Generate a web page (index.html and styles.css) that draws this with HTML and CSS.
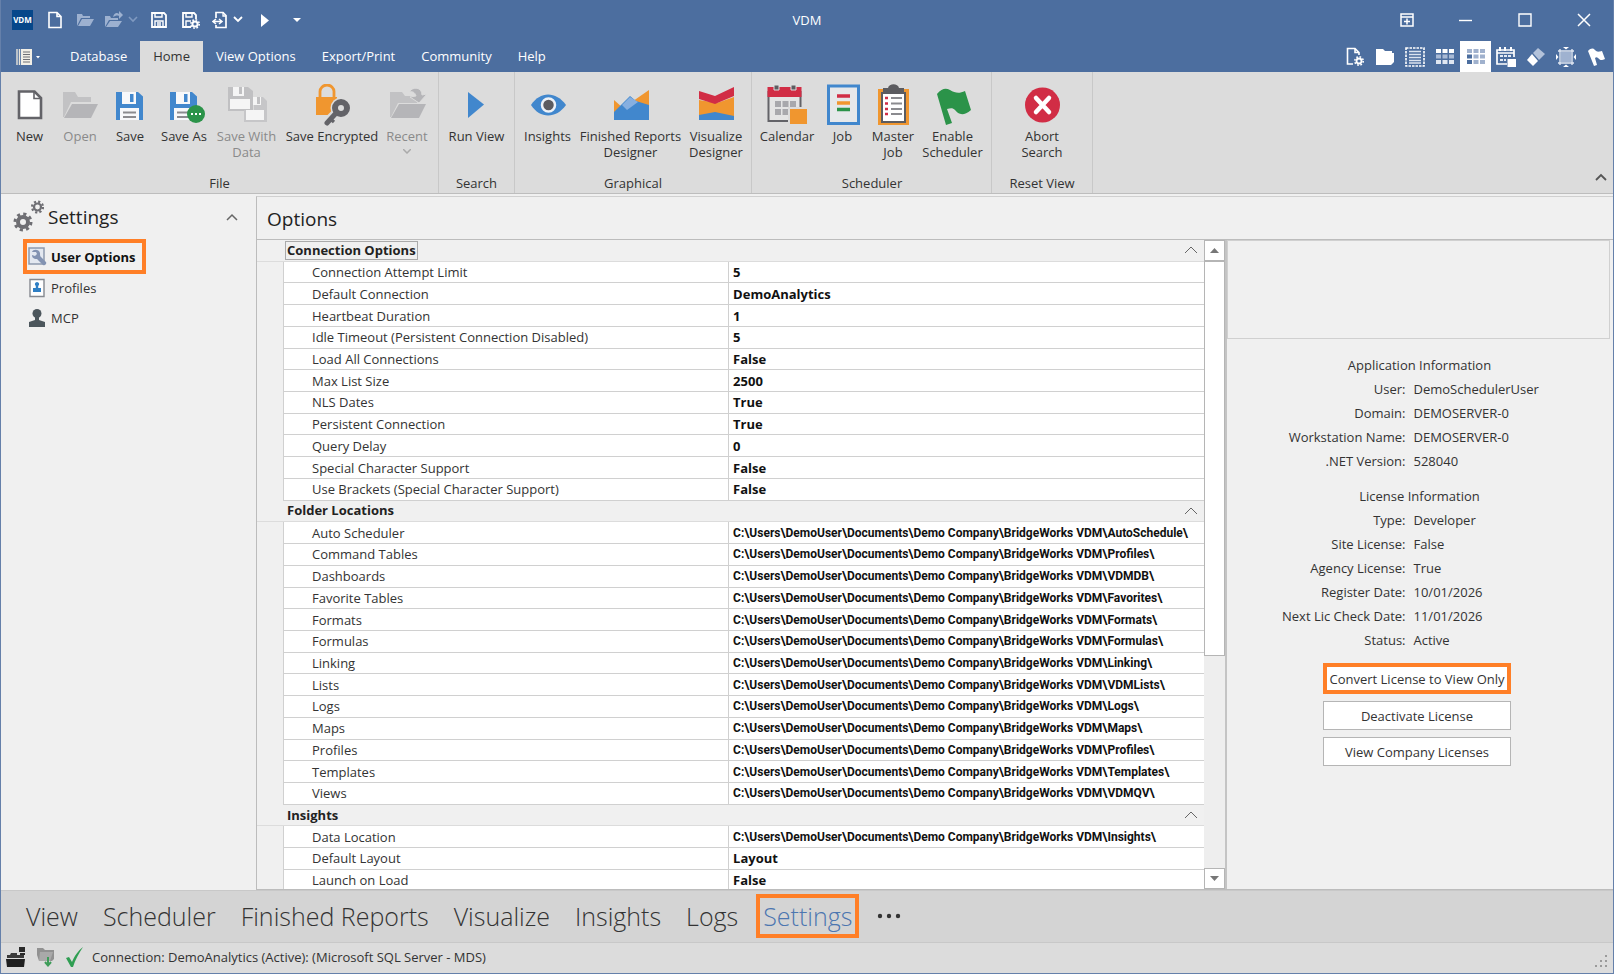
FILE: index.html
```html
<!DOCTYPE html>
<html lang="en">
<head>
<meta charset="utf-8">
<title>VDM</title>
<link rel="stylesheet" href="styles.css">
</head>
<body>
<header class="titlebar">
  <div class="quick">
    <span class="logo">VDM</span>
    <button class="q q-new" aria-label="New"><svg width="16" height="18" viewBox="0 0 16 18"><path d="M2 1.500h8l4 4v11H2z M10 1.500v4h4" fill="none" stroke="#fff" stroke-width="1.600"/></svg></button>
    <button class="q q-open" aria-label="Open"><svg width="18" height="14" viewBox="0 0 18 14"><path d="M1 13V1h5l1 2h7v2H5z M6 6h12l-4 7H2z" fill="#9db1d0"/></svg></button>
    <button class="q q-split" aria-label="Open recent"><svg width="34" height="18" viewBox="0 0 34 18"><path d="M1 16V5h5l1 2h7v2H5z M6 10h12l-4 6H2z" fill="#9db1d0"/><path d="M9 6c1-4 4-5 6-3V0l4 4-4 4V5c-2-1-4 0-6 1z" fill="#9db1d0"/><path d="M25 6l4 4 4-4" fill="none" stroke="#7f99c0" stroke-width="1.600"/></svg></button>
    <button class="q q-save" aria-label="Save"><svg width="16" height="16" viewBox="0 0 16 16"><path d="M1 1h12l2 2v12H1z" fill="none" stroke="#fff" stroke-width="1.800"/><path d="M4 1v4h7V1 M4 15V9h8v6 M6 11h4M6 13h4" fill="none" stroke="#fff" stroke-width="1.400"/></svg></button>
    <button class="q q-gear" aria-label="Save settings"><svg width="18" height="17" viewBox="0 0 18 17"><path d="M9 15H1V1h11l2 2v4" fill="none" stroke="#fff" stroke-width="1.800"/><path d="M4 1v4h6V1 M4 15V9h5" fill="none" stroke="#fff" stroke-width="1.400"/><circle cx="13" cy="12" r="2.600" fill="none" stroke="#fff" stroke-width="2"/><circle cx="13" cy="12" r="4.200" fill="none" stroke="#fff" stroke-width="1.600" stroke-dasharray="1.700 1.600"/></svg></button>
    <button class="q q-split" aria-label="Import"><svg width="32" height="18" viewBox="0 0 32 18"><path d="M4 7V1.500h7l3 3v12H4V14" fill="none" stroke="#fff" stroke-width="1.700"/><path d="M11 1v4h3" fill="none" stroke="#fff" stroke-width="1.300"/><path d="M4 8L1 10.500l3 2.500M7 8l3 2.500L7 13M2 10.500h7" fill="none" stroke="#fff" stroke-width="1.500"/><path d="M22 6l4 4 4-4" fill="none" stroke="#fff" stroke-width="1.800"/></svg></button>
    <button class="q q-play" aria-label="Run"><svg width="8" height="13" viewBox="0 0 8 13"><path d="M0 0l8 6.500L0 13z" fill="#fff"/></svg></button>
    <button class="q q-play" aria-label="Customize toolbar"><svg width="8" height="4" viewBox="0 0 8 4"><path d="M0 0h8L4 4z" fill="#fff"/></svg></button>
  </div>
  <h1 class="title">VDM</h1>
  <div class="window">
    <button aria-label="Ribbon display"><svg width="14" height="14" viewBox="0 0 14 14"><path d="M1 1h12v12H1zM1 4h12M7 5.500v6M4 8.500h6" fill="none" stroke="#fff" stroke-width="1.500"/></svg></button>
    <button aria-label="Minimize"><svg width="13" height="14" viewBox="0 0 13 14"><path d="M0 7.500h13" stroke="#fff" stroke-width="1.400"/></svg></button>
    <button aria-label="Maximize"><svg width="14" height="14" viewBox="0 0 14 14"><path d="M1 1h12v12H1z" fill="none" stroke="#fff" stroke-width="1.400"/></svg></button>
    <button aria-label="Close"><svg width="14" height="14" viewBox="0 0 14 14"><path d="M1 1l12 12M13 1L1 13" stroke="#fff" stroke-width="1.500"/></svg></button>
  </div>
</header>

<nav class="tabs">
  <button class="filemenu" aria-label="Application menu"><svg width="24" height="18" viewBox="0 0 24 18"><path d="M1 1v16M3.500 1v16" stroke="#e9e4da" stroke-width="1.400"/><path d="M5 1h11v16H5z" fill="#f2efe6"/><path d="M7 4h7M7 6.500h7M7 9h7M7 11.500h7M7 14h7" stroke="#6f7075" stroke-width="1.200"/><path d="M20 8h4l-2 2.500z" fill="#fff"/></svg></button>
  <a class="tab" href="#database">Database</a>
  <a class="tab active" href="#home">Home</a>
  <a class="tab" href="#view">View Options</a>
  <a class="tab" href="#export">Export/Print</a>
  <a class="tab" href="#community">Community</a>
  <a class="tab" href="#help">Help</a>
  <div class="tools">
    <button aria-label="Document settings"><svg width="18" height="20" viewBox="0 0 18 20"><path d="M7 17H1.500V1.500H9L13 5.500V8M9 1.500v4h4" fill="none" stroke="#fff" stroke-width="1.600"/><circle cx="13" cy="14" r="2.500" fill="none" stroke="#fff" stroke-width="1.800"/><circle cx="13" cy="14" r="4.200" fill="none" stroke="#fff" stroke-width="1.600" stroke-dasharray="1.700 1.600"/></svg></button>
    <button aria-label="Folder"><svg width="18" height="16" viewBox="0 0 18 16"><path d="M0 0h7l2 2h7v2h2v9l-3 3H0z" fill="#fff"/></svg></button>
    <button aria-label="Select rows"><svg width="20" height="20" viewBox="0 0 20 20"><path d="M1 1h18v18H1z" fill="none" stroke="#fff" stroke-width="1.600" stroke-dasharray="2.500 1"/><path d="M4 4.500h12M4 7.500h12M4 10.500h12M4 13.500h12M4 16h12" stroke="#dce4f0" stroke-width="1.400"/></svg></button>
    <button aria-label="Grid"><svg width="18" height="15" viewBox="0 0 18 15"><path d="M0 0h5v4H0zM6.500 0h5v4h-5zM13 0h5v4h-5z" fill="#fff"/><path d="M0 5.500h5v4H0zM6.500 5.500h5v4h-5zM13 5.500h5v4h-5z" fill="#a9bad5"/><path d="M0 11h5v4H0zM6.500 11h5v4h-5zM13 11h5v4h-5z" fill="#dfe6f1"/></svg></button>
    <button class="selected" aria-label="Tiles"><svg width="18" height="15" viewBox="0 0 18 15"><path d="M0 0h5v4H0zM6.500 0h5v4h-5zM13 0h5v4h-5zM6.500 5.500h5v4h-5zM13 5.500h5v4h-5zM6.500 11h5v4h-5zM13 11h5v4h-5z" fill="#a0b1cd"/><path d="M0 5.500h5v4H0zM0 11h5v4H0z" fill="#4c6e9f"/></svg></button>
    <button aria-label="Calendar"><svg width="20" height="20" viewBox="0 0 20 20"><path d="M11 17H1V3h17v7M1 6h17" fill="none" stroke="#fff" stroke-width="1.700"/><path d="M4 0v4M9 0v4M15 0v4" stroke="#fff" stroke-width="2"/><path d="M4 9h3M8 9h3M12 9h3M4 13h3M8 13h2" stroke="#e3eaf4" stroke-width="2"/><path d="M11.500 12H20v8h-8.500z" fill="#fff"/></svg></button>
    <button aria-label="Erase"><svg width="18" height="18" viewBox="0 0 18 18"><path d="M11 0l7 6-6 6-6-7z" fill="#b3c2da"/><path d="M5 6l6 7-5 5-6-6z" fill="#fff"/></svg></button>
    <button aria-label="Fit"><svg width="20" height="20" viewBox="0 0 20 20"><path d="M5 5h10v10H5z" fill="#9fb2d0"/><path d="M4 2v16M16 2v16M2 4h16M2 16h16" stroke="#dfe6f1" stroke-width="1.400"/><path d="M7 0h6l-3 2.500zM7 20h6l-3-2.500zM0 7v6l2.500-3zM20 7v6l-2.500-3z" fill="#fff"/></svg></button>
    <button class="last" aria-label="Flag"><svg width="18" height="18" viewBox="0 0 18 18"><path d="M0 3c3-3 5-3 7-1s3 2 7 1l3 8c-4 2-5 1-7-1-1-1-2-1-3 0l2 7-3 1z" fill="#fff"/></svg></button>
  </div>
</nav>

<section class="ribbon" aria-label="Home ribbon">
  <div class="group g-file">
    <div class="items">
      <button class="item w51"><svg viewBox="0 0 42 42"><path d="M10 7.500h15.500l6.500 6.500v20H10z" fill="#fff" stroke="#636368" stroke-width="2.600"/><path d="M25 8v6.500h7" fill="none" stroke="#636368" stroke-width="1.600"/></svg>New</button>
      <button class="item w50 off"><svg viewBox="0 0 42 42"><path d="M4 33V8h12l3 5h13v5H12L5 33z" fill="#c2c2c4"/><path d="M13 20h26l-7 14H5z" fill="#b5b5b8"/></svg>Open</button>
      <button class="item w50"><svg viewBox="0 0 42 42"><path d="M7 8h22l5 4.500V36H7z" fill="#4187cd"/><path d="M13 8h14v12H13zM11 24h19v12H11z" fill="#f7f8fa"/><path d="M21 10h3.500v8H21z" fill="#4187cd"/><path d="M14 28.500h13M14 33h13" stroke="#8b8b8f" stroke-width="1.800"/></svg>Save</button>
      <button class="item w58"><svg viewBox="0 0 42 42"><path d="M7 8h22l5 4.500V36H7z" fill="#4187cd"/><path d="M13 8h14v12H13zM11 24h19v12H11z" fill="#f7f8fa"/><path d="M21 10h3.500v8H21z" fill="#4187cd"/><path d="M14 28.500h13M14 33h13" stroke="#8b8b8f" stroke-width="1.800"/><circle cx="33" cy="30" r="9" fill="#2b9349"/><path d="M28 30h2M32 30h2M36 30h2" stroke="#fff" stroke-width="2"/></svg>Save As</button>
      <button class="item w67 off"><svg viewBox="0 0 42 42"><path d="M2 3h20l5 4v20H2z" fill="#c0c0c2"/><path d="M7 3h11v9H7zM4 15h20v10H4z" fill="#f5f5f5"/><path d="M13 3h3v7h-3z" fill="#c0c0c2"/><path d="M18 26h10v-13h9l4 4v21H18z" fill="#c6c6c8"/><path d="M27 13h8v8h-8zM20 26h18v10H20z" fill="#f5f5f5"/><path d="M31 13h3v7h-3z" fill="#c0c0c2"/></svg>Save With<br>Data</button>
      <button class="item w104"><svg viewBox="0 0 42 42"><path d="M9 14V7.500a7 6.500 0 0 1 14 0V14" fill="none" stroke="#f0962f" stroke-width="2.800"/><path d="M5 13h21v18H5z" fill="#f0962f"/><path d="M17 37L25 29" stroke="#dcdcdc" stroke-width="9"/><circle cx="30" cy="24" r="10.500" fill="#dcdcdc"/><circle cx="30" cy="24" r="6" fill="#dcdcdc" stroke="#636368" stroke-width="6"/><path d="M26 28L16 39" stroke="#636368" stroke-width="5" stroke-linecap="round"/><path d="M18 34l5 4" stroke="#636368" stroke-width="3.500"/></svg>Save Encrypted</button>
      <button class="item w46 off"><svg viewBox="0 0 42 42"><path d="M4 33V8h12l3 4h8l4 4v3H12L5 33z" fill="#c2c2c4"/><path d="M13 20h27l-7 14H5z" fill="#b5b5b8"/><path d="M23 8C27 2 36 3 36 11l5-1-8 9-9-6 6-1c-1-4-4-5-7-4z" fill="#b5b5b8" stroke="#dcdcdc"/></svg>Recent<svg class="chev" viewBox="0 0 8 5"><path d="M0 0l4 4 4-4" fill="none" stroke="#aaa" stroke-width="1.500"/></svg></button>
    </div>
    <div class="caption">File</div>
  </div>
  <div class="group g-search">
    <div class="items">
      <button class="item w75"><svg viewBox="0 0 42 42"><path d="M12 8l16 12.500L12 34z" fill="#4187cd"/></svg>Run View</button>
    </div>
    <div class="caption">Search</div>
  </div>
  <div class="group g-graph">
    <div class="items">
      <button class="item w55"><svg viewBox="0 0 42 42"><path d="M4 21C13 7 29 7 39 21 29 35 13 35 4 21z" fill="#4187cd"/><circle cx="21.500" cy="21" r="6.500" fill="#5c5c60" stroke="#eef2f7" stroke-width="2.500"/></svg>Insights</button>
      <button class="item w110"><svg viewBox="0 0 42 42"><path d="M4 16l9 8L39 6v24H4z" fill="#f0962f"/><path d="M4 28l16-16 6 5 13 4v15H4z" fill="#4187cd"/><path d="M12 21l8-8 8 5-11 8z" fill="#86afe0"/></svg>Finished Reports<br>Designer</button>
      <button class="item w60"><svg viewBox="0 0 42 42"><path d="M4 16l18 3 17-6v20H4z" fill="#f0962f"/><path d="M4 7l16 5 19-9v9l-19 8L4 15z" fill="#d12d45"/><path d="M4 31l16-3 19 4v4H4z" fill="#4187cd"/></svg>Visualize<br>Designer</button>
    </div>
    <div class="caption">Graphical</div>
  </div>
  <div class="group g-sched">
    <div class="items">
      <button class="item w60"><svg viewBox="0 0 42 42"><path d="M2.500 8h32v29h-32z" fill="#e4e4e4" stroke="#636368" stroke-width="2"/><path d="M1.500 3h34v10h-34z" fill="#d12d45"/><path d="M8 1h5v5H8zM25 1h5v5h-5z" fill="#5c5c60" stroke="#ddd"/><path d="M9 17h6v6H9zM16.500 17h6v6h-6zM24 17h6v6h-6zM9 25h6v6H9zM16.500 25h6v6h-6z" fill="#a8a8ac"/><path d="M22 23h20v19H22z" fill="#dcdcdc"/><path d="M24 25h17v15H24z" fill="#f0962f"/></svg>Calendar</button>
      <button class="item w51"><svg viewBox="0 0 42 42"><path d="M6.500 2h30v37.500h-30z" fill="#e6e8ea" stroke="#4187cd" stroke-width="3"/><path d="M15 12h13" stroke="#d12d45" stroke-width="3.500"/><path d="M15 19h13" stroke="#f0962f" stroke-width="3.500"/><path d="M15 25.500h13" stroke="#2b9349" stroke-width="3.500"/></svg>Job</button>
      <button class="item w50"><svg viewBox="0 0 42 42"><path d="M6 5h31v36H6z" fill="#f0962f"/><path d="M10 9h23v29H10z" fill="#fff" stroke="#5c5c60" stroke-width="2"/><path d="M11 10V4h5c1-5 10-5 11 0h5v6z" fill="#5c5c60"/><path d="M13 14h3M13 19.500h3M13 25h3M13 30h3" stroke="#d12d45" stroke-width="2.500"/><path d="M19 14h11M19 19.500h11M19 25h11M19 30h11" stroke="#8b8b8f" stroke-width="1.800"/></svg>Master<br>Job</button>
      <button class="item w69"><svg viewBox="0 0 42 42"><path d="M5 10c5-6 9-6 13-4 5 3 9 4 15 1l6 19c-8 7-13 4-16 0-2-2-4-2-8-1l5 14-6 2z" fill="#2b9349"/></svg>Enable<br>Scheduler</button>
    </div>
    <div class="caption">Scheduler</div>
  </div>
  <div class="group g-reset">
    <div class="items">
      <button class="item w100"><svg viewBox="0 0 42 42"><circle cx="21.500" cy="21" r="17.500" fill="#d12d45"/><path d="M15 14l13 14M28 14L15 28" stroke="#fff" stroke-width="4.500" stroke-linecap="round"/></svg>Abort<br>Search</button>
    </div>
    <div class="caption">Reset View</div>
  </div>
  <button class="collapse" aria-label="Collapse ribbon"><svg width="12" height="8" viewBox="0 0 12 8"><path d="M1 7l5-5 5 5" fill="none" stroke="#555" stroke-width="1.800"/></svg></button>
</section>

<main class="work">
  <aside class="side">
    <div class="sidehead">
      <svg width="32" height="34" viewBox="0 0 32 34"><g fill="none" stroke="#6e6e73"><circle cx="11" cy="22" r="5" stroke-width="4"/><circle cx="11" cy="22" r="8" stroke-width="3" stroke-dasharray="3.140 3.140"/><circle cx="25.500" cy="7" r="3.500" stroke-width="2.200"/><circle cx="25.500" cy="7" r="5.500" stroke-width="2.200" stroke-dasharray="2.160 2.160"/></g></svg>
      <h2>Settings</h2>
      <button aria-label="Collapse settings"><svg width="12" height="8" viewBox="0 0 12 8"><path d="M1 7l5-5 5 5" fill="none" stroke="#666" stroke-width="1.500"/></svg></button>
    </div>
    <a class="sidelink current" href="#user"><svg width="20" height="20" viewBox="0 0 20 20"><path d="M1 1h15v16H1z" fill="#e3e8f0" stroke="#8d99ad" stroke-width="1.500"/><path d="M4 5c1-3 7-3 8 1 0 2 0 3 1 4l5 5c1 2-1 4-3 3l-6-6c-4 0-5-2-5-4l3 1 2-2-1-2z" fill="#8393b2"/></svg>User Options</a>
    <a class="sidelink" href="#profiles"><svg width="20" height="20" viewBox="0 0 20 20"><path d="M2 1.500h14v17H2z" fill="#fff" stroke="#85898f" stroke-width="1.400"/><path d="M9 4a2.200 2.200 0 0 1 1.200 4v2h2.800v4H5v-4h2.800V8A2.200 2.200 0 0 1 9 4z" fill="#2f7fc4"/></svg>Profiles</a>
    <a class="sidelink" href="#mcp"><svg width="20" height="20" viewBox="0 0 20 20"><circle cx="9" cy="5.500" r="4.500" fill="#4c565c"/><path d="M7 8h4v4l6 2v5H1v-5l6-2z" fill="#4c565c"/></svg>MCP</a>
  </aside>

  <section class="content">
    <h2 class="heading">Options</h2>
    <div class="panes">
      <div class="gridwrap">
        <div class="scroller">
        <table class="grid">
          <colgroup><col class="c-mark"><col class="c-name"><col></colgroup>
          <tbody>
          <tr class="cat focus"><th colspan="3"><button><span>Connection Options</span><svg class="up" viewBox="0 0 12 8"><path d="M0 7l6-6 6 6"/></svg></button></th></tr>
          <tr><td></td><td>Connection Attempt Limit</td><td>5</td></tr>
          <tr><td></td><td>Default Connection</td><td>DemoAnalytics</td></tr>
          <tr><td></td><td>Heartbeat Duration</td><td>1</td></tr>
          <tr><td></td><td>Idle Timeout (Persistent Connection Disabled)</td><td>5</td></tr>
          <tr><td></td><td>Load All Connections</td><td>False</td></tr>
          <tr><td></td><td>Max List Size</td><td>2500</td></tr>
          <tr><td></td><td>NLS Dates</td><td>True</td></tr>
          <tr><td></td><td>Persistent Connection</td><td>True</td></tr>
          <tr><td></td><td>Query Delay</td><td>0</td></tr>
          <tr><td></td><td>Special Character Support</td><td>False</td></tr>
          <tr><td></td><td>Use Brackets (Special Character Support)</td><td>False</td></tr>
          <tr class="cat"><th colspan="3"><button><span>Folder Locations</span><svg class="up" viewBox="0 0 12 8"><path d="M0 7l6-6 6 6"/></svg></button></th></tr>
          <tr class="path"><td></td><td>Auto Scheduler</td><td>C:\Users\DemoUser\Documents\Demo Company\BridgeWorks VDM\AutoSchedule\</td></tr>
          <tr class="path"><td></td><td>Command Tables</td><td>C:\Users\DemoUser\Documents\Demo Company\BridgeWorks VDM\Profiles\</td></tr>
          <tr class="path"><td></td><td>Dashboards</td><td>C:\Users\DemoUser\Documents\Demo Company\BridgeWorks VDM\VDMDB\</td></tr>
          <tr class="path"><td></td><td>Favorite Tables</td><td>C:\Users\DemoUser\Documents\Demo Company\BridgeWorks VDM\Favorites\</td></tr>
          <tr class="path"><td></td><td>Formats</td><td>C:\Users\DemoUser\Documents\Demo Company\BridgeWorks VDM\Formats\</td></tr>
          <tr class="path"><td></td><td>Formulas</td><td>C:\Users\DemoUser\Documents\Demo Company\BridgeWorks VDM\Formulas\</td></tr>
          <tr class="path"><td></td><td>Linking</td><td>C:\Users\DemoUser\Documents\Demo Company\BridgeWorks VDM\Linking\</td></tr>
          <tr class="path"><td></td><td>Lists</td><td>C:\Users\DemoUser\Documents\Demo Company\BridgeWorks VDM\VDMLists\</td></tr>
          <tr class="path"><td></td><td>Logs</td><td>C:\Users\DemoUser\Documents\Demo Company\BridgeWorks VDM\Logs\</td></tr>
          <tr class="path"><td></td><td>Maps</td><td>C:\Users\DemoUser\Documents\Demo Company\BridgeWorks VDM\Maps\</td></tr>
          <tr class="path"><td></td><td>Profiles</td><td>C:\Users\DemoUser\Documents\Demo Company\BridgeWorks VDM\Profiles\</td></tr>
          <tr class="path"><td></td><td>Templates</td><td>C:\Users\DemoUser\Documents\Demo Company\BridgeWorks VDM\Templates\</td></tr>
          <tr class="path"><td></td><td>Views</td><td>C:\Users\DemoUser\Documents\Demo Company\BridgeWorks VDM\VDMQV\</td></tr>
          <tr class="cat"><th colspan="3"><button><span>Insights</span><svg class="up" viewBox="0 0 12 8"><path d="M0 7l6-6 6 6"/></svg></button></th></tr>
          <tr class="path"><td></td><td>Data Location</td><td>C:\Users\DemoUser\Documents\Demo Company\BridgeWorks VDM\Insights\</td></tr>
          <tr><td></td><td>Default Layout</td><td>Layout</td></tr>
          <tr><td></td><td>Launch on Load</td><td>False</td></tr>
          </tbody>
        </table>
        </div>
        <div class="scrollbar">
          <button aria-label="Scroll up"><svg width="9" height="5" viewBox="0 0 9 5"><path d="M0 5h9L4.500 0z" fill="#777"/></svg></button>
          <div class="track"><div class="thumb"></div></div>
          <button aria-label="Scroll down"><svg width="9" height="5" viewBox="0 0 9 5"><path d="M0 0h9L4.500 5z" fill="#777"/></svg></button>
        </div>
      </div>
      <aside class="info">
        <div class="blank"></div>
        <h3>Application Information</h3>
        <dl>
          <dt>User:</dt><dd>DemoSchedulerUser</dd>
          <dt>Domain:</dt><dd>DEMOSERVER-0</dd>
          <dt>Workstation Name:</dt><dd>DEMOSERVER-0</dd>
          <dt>.NET Version:</dt><dd>528040</dd>
        </dl>
        <h3>License Information</h3>
        <dl>
          <dt>Type:</dt><dd>Developer</dd>
          <dt>Site License:</dt><dd>False</dd>
          <dt>Agency License:</dt><dd>True</dd>
          <dt>Register Date:</dt><dd>10/01/2026</dd>
          <dt>Next Lic Check Date:</dt><dd>11/01/2026</dd>
          <dt>Status:</dt><dd>Active</dd>
        </dl>
        <div class="actions">
          <button class="marked">Convert License to View Only</button>
          <button>Deactivate License</button>
          <button>View Company Licenses</button>
        </div>
      </aside>
    </div>
  </section>
</main>

<nav class="modules">
  <a href="#v">View</a>
  <a href="#s">Scheduler</a>
  <a href="#f">Finished Reports</a>
  <a href="#z">Visualize</a>
  <a href="#i">Insights</a>
  <a href="#l">Logs</a>
  <a class="current" href="#t">Settings</a>
  <button aria-label="More"><svg width="24" height="6" viewBox="0 0 24 6"><g fill="#333"><circle cx="3" cy="3" r="2.200"/><circle cx="12" cy="3" r="2.200"/><circle cx="21" cy="3" r="2.200"/></g></svg></button>
</nav>

<footer class="status">
  <svg width="20" height="20" viewBox="0 0 20 20"><path d="M1 8h3l1-2h6v2h7v3H1z" fill="#3a3a3a"/><path d="M0 12h19l-1 8H1z" fill="#1f1f1f"/><path d="M13 0h6v5h-6zM14 6h5v2h-5z" fill="#2a2a2a"/></svg>
  <svg width="18" height="20" viewBox="0 0 18 20"><path d="M0 1h6l2 2h9v9l-2 2H2L0 8z" fill="#919191"/><path d="M3 5h13l-3 9H2z" fill="#a9a9a9"/><path d="M11 10v8M8 15l3 3.500 3-3.500" fill="none" stroke="#3d9c58" stroke-width="2"/></svg>
  <svg width="18" height="20" viewBox="0 0 18 20"><path d="M0 11l3-1 3 5C9 8 12 4 17 0 13 6 9 13 7 20H5z" fill="#2f9e52"/></svg>
  <span>Connection: DemoAnalytics (Active): (Microsoft SQL Server - MDS)</span>
  <svg class="grip" width="14" height="14" viewBox="0 0 14 14"><path d="M11 1h2v2h-2zM6 6h2v2H6zM11 6h2v2h-2zM1 11h2v2H1zM6 11h2v2H6zM11 11h2v2h-2z" fill="#9a9a9a"/></svg>
</footer>
</body>
</html>
```
FILE: styles.css
```css
* { box-sizing: border-box; }

body {
  margin: 0;
  height: 100vh;
  display: flex;
  flex-direction: column;
  overflow: hidden;
  border: 1px solid #6580aa;
  border-top: 0;
  background: #f0f0f0;
  color: #333;
  font: 13px/16px "Open Sans", "Noto Sans", sans-serif;
}

h1, h2, h3, dl, dd { margin: 0; font-weight: 400; }
a { color: inherit; text-decoration: none; }
svg { flex: none; display: block; }

button {
  margin: 0;
  padding: 0;
  border: 0;
  background: none;
  color: inherit;
  font: inherit;
}

/* Title bar */
.titlebar {
  display: grid;
  grid-template-columns: 1fr auto 1fr;
  align-items: center;
  height: 41px;
  flex: none;
  padding-bottom: 1px;
  background: #4c6e9f;
  color: #fff;
}
.quick { display: flex; align-items: center; padding-left: 11px; }
.logo {
  width: 21px;
  margin-right: 5px;
  background: #06478a;
  font-size: 8px;
  font-weight: 700;
  line-height: 20px;
  text-align: center;
}
.q { display: flex; align-items: center; justify-content: center; height: 24px; }
.q-new { width: 33px; }
.q-open { width: 28px; }
.q-split { width: 43px; }
.q-save { width: 34px; }
.q-gear { width: 30px; }
.q-play { width: 32px; }
.title { font-size: 13px; }
.window { display: flex; justify-content: flex-end; }
.window button { width: 59px; height: 39px; display: flex; align-items: center; justify-content: center; }

/* Ribbon tabs */
.tabs { display: flex; height: 31px; flex: none; background: #4c6e9f; color: #fff; }
.filemenu { width: 56px; padding-left: 15px; }
.tab { padding: 0 13px; line-height: 30px; }
.tab.active { background: #dcdcdc; color: #333; }
.tools { display: flex; margin-left: auto; }
.tools button { width: 30px; display: flex; align-items: center; justify-content: center; }
.tools .selected { width: 31px; background: #fff; }
.tools .last { width: 32px; }

/* Ribbon */
.ribbon {
  display: flex;
  flex: none;
  height: 122px;
  background: #dcdcdc;
  border-bottom: 1px solid #bdbdbd;
}
.group {
  display: flex;
  flex-direction: column;
  justify-content: space-between;
  padding: 12px 5px 2px;
  border-right: 1px solid #c8c8c8;
}
.g-file { padding: 12px 0 2px; }
.g-file .items { padding: 0 8px 0 3px; }
.g-search, .g-reset { padding: 12px 0 2px; }
.g-sched { padding: 12px 4px 2px 5px; }
.items { display: flex; align-items: flex-start; }
.item { display: flex; flex-direction: column; align-items: center; white-space: nowrap; }
.item svg { width: 42px; height: 42px; margin-bottom: 2px; }
.item .chev { width: 8px; height: 5px; margin: 5px 0 0; }
.off { color: #8a8a8a; }
.w46 { width: 46px; }
.w50 { width: 50px; }
.w51 { width: 51px; }
.w55 { width: 55px; }
.w58 { width: 58px; }
.w60 { width: 60px; }
.w67 { width: 67px; }
.w69 { width: 69px; }
.w75 { width: 75px; }
.w100 { width: 100px; }
.w104 { width: 104px; }
.w110 { width: 111px; }
.caption { text-align: center; }
.collapse { margin: auto 6px 12px auto; }

/* Work area */
.work { display: flex; flex: 1; min-height: 0; }
.side { width: 255px; flex: none; padding: 5px 0 0 11px; }
.sidehead { display: flex; align-items: center; height: 35px; margin-bottom: 5px; color: #222; }
.sidehead h2 { flex: 1; padding-left: 4px; font-size: 19px; }
.sidehead button { width: 12px; margin-right: 18px; }
.sidelink { display: flex; align-items: center; gap: 3px; width: max-content; height: 30px; padding: 0 16px; }
.sidelink.current {
  height: 35px;
  margin-left: 11px;
  margin-bottom: -1px;
  padding: 0 6px 0 1px;
  border: 4px solid #ff7f27;
  color: #111;
  font-weight: 700;
}
.content {
  display: flex;
  flex-direction: column;
  flex: 1;
  min-width: 0;
  margin-top: 2px;
  border-left: 1px solid #bcbcbc;
  border-top: 1px solid #d0d0d0;
}
.heading { height: 42px; padding-left: 10px; font-size: 19px; line-height: 45px; color: #222; }
.panes { display: flex; flex: 1; min-height: 0; border-top: 1px solid #bcbcbc; border-bottom: 1px solid #bcbcbc; }
.gridwrap { display: flex; flex: 1; min-width: 0; border-right: 2px solid #c4c4c4; }
.scroller { flex: 1; min-width: 0; overflow: hidden; }

.grid { width: 100%; height: calc(100% + 3px); border-spacing: 0; table-layout: fixed; }
.c-mark { width: 27px; }
.c-name { width: 47%; }
.grid th, .grid td { height: 21px; padding: 0; white-space: nowrap; text-align: left; line-height: 18px; }
.grid td { background: #fff; border-bottom: 1px solid #d0d0d0; }
.grid td:first-child { background: #f0f0f0; border-bottom: 0; border-right: 1px solid #d0d0d0; }
.grid td:nth-child(2) { padding-left: 28px; border-right: 1px solid #d0d0d0; }
.grid td:last-child { padding-left: 4px; color: #111; font-weight: 700; }
.grid .path td:last-child { font-family: Roboto, "Open Sans", sans-serif; font-size: 12px; }
.cat th { background: #f0f0f0; color: #222; font-weight: 700; border-bottom: 1px solid #dcdcdc; }
.cat button { display: flex; align-items: center; justify-content: space-between; width: 100%; padding: 0 7px 0 29px; line-height: 17px; }
.cat span { padding: 0 1px; }
.focus span { outline: 1px solid #aaa; }
.up { width: 12px; height: 8px; fill: none; stroke: #666; stroke-width: 1; }

.scrollbar { display: flex; flex-direction: column; width: 21px; background: #eee; }
.scrollbar button { display: flex; align-items: center; justify-content: center; height: 21px; background: #fff; border: 1px solid #b5b5b5; }
.track { flex: 1; }
.thumb { height: 65%; background: #fff; border: 1px solid #b5b5b5; }

/* Information pane */
.info { width: 386px; flex: none; padding-right: 3px; }
.blank { height: 99px; border: 1px solid #d0d0d0; margin-bottom: 14px; }
.info h3 { padding-left: 2px; font-size: 13px; line-height: 24px; text-align: center; }
.info dl { display: grid; grid-template-columns: 1fr 1fr; column-gap: 8px; padding-right: 18px; margin-bottom: 11px; line-height: 24px; }
.info dt { text-align: right; }
.actions { display: flex; flex-direction: column; align-items: center; gap: 7px; padding-right: 3px; }
.actions button { width: 188px; height: 29px; background: #fff; border: 1px solid #b5b5b5; white-space: nowrap; }
.actions .marked { height: 31px; border: 4px solid #ff7f27; line-height: 22px; }

/* Module bar */
.modules {
  display: flex;
  align-items: center;
  gap: 25px;
  height: 52px;
  flex: none;
  padding: 0 0 2px 25px;
  background: #d4d4d4;
  border-top: 1px solid #c8c8c8;
  font: 300 25px/36px "Open Sans", "Noto Sans", sans-serif;
}
.modules .current { margin: 0 -7px; padding: 0 3px; border: 4px solid #ff7f27; color: #4c76b0; }

/* Status bar */
.status { display: flex; align-items: center; height: 31px; flex: none; padding: 0 5px 2px; background: #dcdcdc; border-top: 1px solid #c8c8c8; }
.status svg { margin-right: 11px; }
.status svg:nth-of-type(3) { margin-right: 8px; }
.status .grip { margin: 8px 0 0 auto; }
```
